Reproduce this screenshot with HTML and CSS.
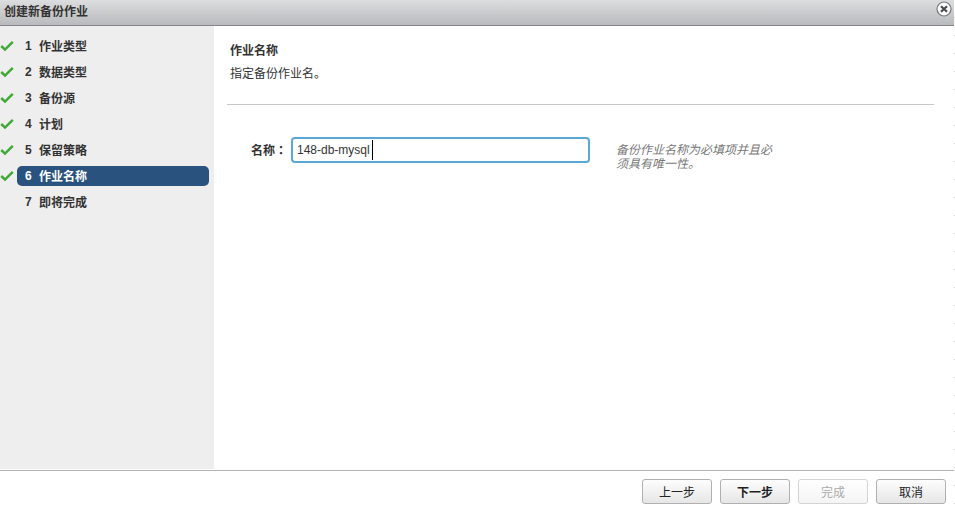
FILE: index.html
```
<!DOCTYPE html>
<html lang="zh-CN">
<head>
<meta charset="utf-8">
<title>创建新备份作业</title>
<link rel="stylesheet" href="styles.css">
</head>
<body>
<svg class="defs" aria-hidden="true">
  <symbol id="check" viewBox="0 0 14 12"><path d="M1.2 6 5 9.6 12.8 1.8" fill="none" stroke="#3fa935" stroke-width="2.5"/></symbol>
</svg>
<div class="dialog" role="dialog" aria-labelledby="dialog-title">
  <header class="titlebar">
    <h1 class="title" id="dialog-title">创建新备份作业</h1>
    <button class="close" type="button" aria-label="关闭">
      <svg viewBox="0 0 16 16" width="16" height="16"><circle cx="8" cy="8" r="7" fill="#fafafa" stroke="#77787b" stroke-width="1.2"/><path d="M5 5.2 11 10.8M11 5.2 5 10.8" stroke="#4a4a4c" stroke-width="2.2"/></svg>
    </button>
  </header>
  <div class="body">
    <nav class="sidebar">
      <ol class="steps">
        <li class="step"><svg class="check"><use href="#check"/></svg><a class="link" href="#"><span class="num">1</span>作业类型</a></li>
        <li class="step"><svg class="check"><use href="#check"/></svg><a class="link" href="#"><span class="num">2</span>数据类型</a></li>
        <li class="step"><svg class="check"><use href="#check"/></svg><a class="link" href="#"><span class="num">3</span>备份源</a></li>
        <li class="step"><svg class="check"><use href="#check"/></svg><a class="link" href="#"><span class="num">4</span>计划</a></li>
        <li class="step"><svg class="check"><use href="#check"/></svg><a class="link" href="#"><span class="num">5</span>保留策略</a></li>
        <li class="step"><svg class="check"><use href="#check"/></svg><a class="link current" href="#" aria-current="step"><span class="num">6</span>作业名称</a></li>
        <li class="step"><span class="check"></span><a class="link" href="#"><span class="num">7</span>即将完成</a></li>
      </ol>
    </nav>
    <main class="content">
      <div class="intro">
        <h2 class="heading">作业名称</h2>
        <p class="description">指定备份作业名。</p>
      </div>
      <div class="field">
        <label class="label" for="name">名称<span class="colon" lang="zh-TW">：</span></label>
        <div class="control">
          <input class="input" id="name" type="text" value="148-db-mysql">
          <span class="caret"></span>
        </div>
        <p class="hint">备份作业名称为必填项并且必须具有唯一性。</p>
      </div>
    </main>
  </div>
  <footer class="footer">
    <button class="button" type="button">上一步</button>
    <button class="button primary" type="button">下一步</button>
    <button class="button" type="button" disabled>完成</button>
    <button class="button" type="button">取消</button>
  </footer>
</div>
</body>
</html>
```
FILE: styles.css
```
* { box-sizing: border-box; }
body {
  margin: 0;
  background: repeating-linear-gradient(#fff 0 17px, #ccc 17px 18px) right top / 1px 100% no-repeat #fff;
  color: #333;
  font: 12px/16px "Liberation Sans", "Noto Sans CJK SC", sans-serif;
}
h1, h2, p, ol { margin: 0; padding: 0; font-size: 12px; }
.defs { position: absolute; width: 0; height: 0; }
.dialog {
  display: flex;
  flex-direction: column;
  min-height: 100vh;
  margin-right: 1px;
}
.titlebar {
  display: flex;
  justify-content: space-between;
  height: 26px;
  padding: 1px 2px 0 4px;
  background: linear-gradient(#dcddde, #b9babd);
  border-bottom: 1px solid #858688;
}
.title { line-height: 22px; }
.close { width: 16px; height: 16px; padding: 0; border: 0; background: none; }
.close svg { display: block; }
.body { display: flex; flex: 1; }
.sidebar {
  width: 214px;
  margin-bottom: 1px;
  padding: 10px 5px 0 0;
  background: #eee;
}
.steps { display: grid; gap: 6px; list-style: none; }
.step { display: flex; align-items: center; height: 20px; }
.check { width: 14px; height: 12px; margin-right: 3px; }
.link {
  display: flex;
  flex: 1;
  height: 20px;
  padding: 0 8px;
  border-radius: 5px;
  color: #333;
  font-weight: bold;
  line-height: 22px;
  text-decoration: none;
}
.num { width: 14px; line-height: 20px; }
.current { background: #2a527f; color: #fff; }
.content { flex: 1; padding: 17px 20px 0 13px; }
.intro { padding: 0 3px 22px; border-bottom: 1px solid #c8c8c8; }
.description { margin-top: 7px; }
.field { display: flex; margin-top: 32px; padding-left: 24px; }
.label { width: 40px; font-weight: bold; line-height: 26px; }
.colon { font-family: "Noto Sans CJK TC", sans-serif; }
.control { position: relative; width: 299px; }
.input {
  display: block;
  width: 100%;
  height: 26px;
  padding: 0 4px;
  border: 2px solid #5aa8d8;
  border-radius: 4px;
  outline: 0;
  background: #fff;
  color: #333;
  font: 12px "Liberation Sans", sans-serif;
}
.caret {
  position: absolute;
  top: 3px;
  left: 81px;
  width: 1px;
  height: 20px;
  background: #000;
}
.hint {
  width: 164px;
  margin: 6px 0 0 26px;
  color: #777;
  font-style: italic;
  line-height: 14px;
}
.footer {
  display: flex;
  justify-content: flex-end;
  gap: 8px;
  padding: 8px 8px 7px;
  border-top: 1px solid #b4b4b4;
}
.button {
  width: 70px;
  height: 25px;
  padding: 0;
  border: 1px solid #b0b0b0;
  border-radius: 3px;
  background: linear-gradient(#fdfdfd, #e6e6e6);
  color: #222;
  font: 12px "Liberation Sans", "Noto Sans CJK SC", sans-serif;
}
.primary { font-weight: bold; }
.button:disabled { border-color: #d4d4d4; background: linear-gradient(#fff, #f4f4f4); color: #aaa; }
```
